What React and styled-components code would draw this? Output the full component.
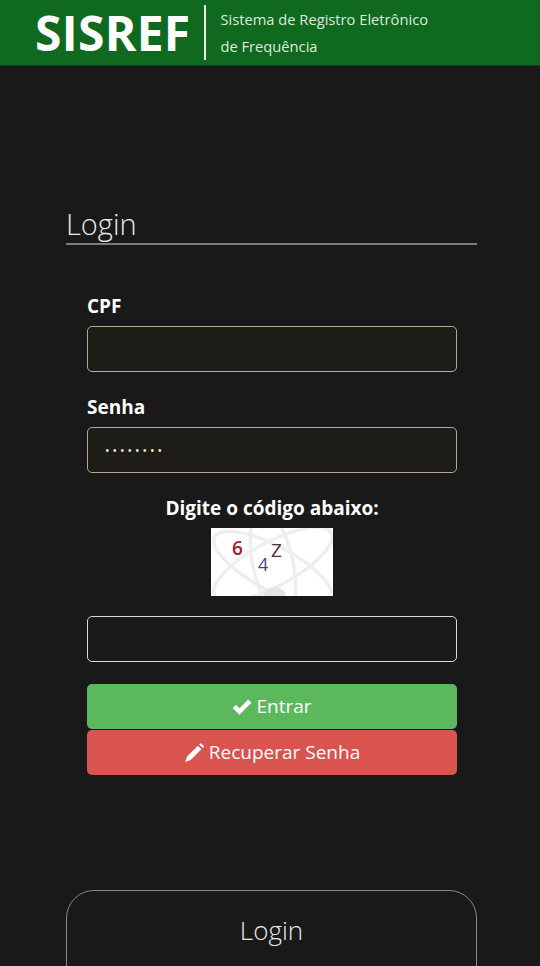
import React from 'react'
import styled, { createGlobalStyle } from 'styled-components'

const GlobalStyle = createGlobalStyle`
  html, body {
    margin: 0;
    height: 966px;
    overflow: hidden;
    background: #191919;
  }
  * { box-sizing: border-box; }
  body {
    font-family: "Open Sans", "Noto Sans", sans-serif;
    color: #fff;
  }
`

const Header = styled.header`
  height: 66px;
  background: #0f691e;
  border-bottom: 1px solid #0d3f16;
  display: flex;
  align-items: center;
  padding: 0 0 0 35px;
`

const Brand = styled.div`
  font-size: 48px;
  font-weight: 700;
  line-height: 66px;
  letter-spacing: 0.3px;
  color: #fff;
`

const Divider = styled.div`
  width: 2px;
  height: 55px;
  margin: 0 14px 0 14px;
  background: #e8efe9;
`

const Tagline = styled.div`
  font-size: 14.7px;
  line-height: 27px;
  color: #dcebdd;
  margin-top: 1px;
`

const Main = styled.main`
  padding: 140px 63px 0 66px;
`

const Title = styled.h1`
  margin: 0;
  font-size: 29px;
  font-weight: 300;
  line-height: 35px;
  height: 39px;
  color: #e8e8e8;
  border-bottom: 2px solid #7d7d7d;
`

const Form = styled.form`
  padding: 48px 20px 0 21px;
  display: flex;
  flex-direction: column;
`

const Label = styled.label`
  font-size: 19px;
  font-weight: 700;
  line-height: 25px;
  padding-top: 1px;
  margin-bottom: 7px;
  color: #fff;
`

const Input = styled.input`
  display: block;
  width: 100%;
  height: 46px;
  margin-bottom: ${p => p.$gap}px;
  padding: 0 17px;
  border-radius: 5px;
  border: 1px solid ${p => (p.$plain ? '#d8d8d8' : '#b5aa90')};
  background: ${p => (p.$plain ? '#191919' : '#1e1c17')};
  color: #f5edc8;
  font-family: "Open Sans", sans-serif;
  font-size: 12px;
  letter-spacing: 3px;
  outline: none;
`

const CaptchaLabel = styled.div`
  text-align: center;
  font-size: 19px;
  font-weight: 700;
  line-height: 25px;
  margin-bottom: 7px;
`

const Captcha = styled.div`
  position: relative;
  align-self: center;
  width: 122px;
  height: 68px;
  margin-bottom: 20px;
  background: #fff;
  overflow: hidden;
`

const CaptchaArt = styled.svg`
  display: block;
  width: 100%;
  height: 100%;
`

const CaptchaChar = styled.span`
  position: absolute;
  left: ${p => p.$x}px;
  top: ${p => p.$y}px;
  font-family: "Open Sans", sans-serif;
  font-size: ${p => p.$size}px;
  line-height: 1;
  font-weight: ${p => p.$weight};
  color: ${p => p.$color};
`

const Button = styled.button`
  display: flex;
  align-items: center;
  justify-content: center;
  gap: 4px;
  width: 100%;
  height: 45px;
  margin-top: ${p => p.$top}px;
  border: 0;
  border-radius: 5px;
  background: ${p => p.$bg};
  color: #fff;
  font-family: "Open Sans", sans-serif;
  font-size: 19px;
  line-height: 25px;
`

const Card = styled.section`
  margin-top: 115px;
  height: 120px;
  border: 1px solid #8a8a8a;
  border-radius: 28px;
  text-align: center;
  padding-top: 20px;
  font-size: 26px;
  font-weight: 300;
  line-height: 38px;
  color: #e8e8e8;
`

const Icon = styled.svg`
  width: ${p => p.$size}px;
  height: ${p => p.$size}px;
  fill: #fff;
  flex: none;
`

const CheckIcon = () => (
  <Icon $size={20} viewBox="0 0 20 20">
    <path d="M0.6 11 3.9 7.7 7.4 11.2 16.2 2.4 19.5 5.7 7.4 17.8z" />
  </Icon>
)

const PencilIcon = () => (
  <Icon $size={21} viewBox="0 0 20 20">
    <path d="M13.2 3.6 16.6 7 6.4 17.2 1.2 19 2.9 13.9zM14.5 2.3 15.9 0.9 19.3 4.3 17.9 5.7z" />
  </Icon>
)

const App = () => (
  <>
    <GlobalStyle />
    <Header>
      <Brand>SISREF</Brand>
      <Divider />
      <Tagline>
        Sistema de Registro Eletrônico
        <br />
        de Frequência
      </Tagline>
    </Header>
    <Main>
      <Title>Login</Title>
      <Form onSubmit={e => e.preventDefault()}>
        <Label htmlFor="cpf">CPF</Label>
        <Input id="cpf" type="text" $gap={22} />
        <Label htmlFor="senha">Senha</Label>
        <Input id="senha" type="password" defaultValue="12345678" $gap={23} />
        <CaptchaLabel>Digite o código abaixo:</CaptchaLabel>
        <Captcha>
          <CaptchaArt viewBox="0 0 122 68">
            <g fill="none" stroke="#eeeeee" strokeWidth="3.5">
              <ellipse cx="62" cy="40" rx="66" ry="22" transform="rotate(28 62 40)" />
              <ellipse cx="62" cy="36" rx="66" ry="22" transform="rotate(-28 62 36)" />
              <ellipse cx="62" cy="36" rx="20" ry="56" transform="rotate(-12 62 36)" />
            </g>
            <ellipse cx="64" cy="68" rx="11" ry="9" fill="#e4e4e4" />
          </CaptchaArt>
          <CaptchaChar $x={21} $y={11} $size={19} $weight={600} $color="#a3202f">6</CaptchaChar>
          <CaptchaChar $x={47} $y={27} $size={18} $weight={400} $color="#45458a">4</CaptchaChar>
          <CaptchaChar $x={60} $y={13} $size={19} $weight={400} $color="#4a3535">Z</CaptchaChar>
        </Captcha>
        <Input type="text" $plain $gap={0} />
        <Button type="submit" $bg="#5cb85c" $top={22}>
          <CheckIcon />
          Entrar
        </Button>
        <Button type="button" $bg="#d9534f" $top={1}>
          <PencilIcon />
          Recuperar Senha
        </Button>
      </Form>
      <Card>Login</Card>
    </Main>
  </>
)

export default App
